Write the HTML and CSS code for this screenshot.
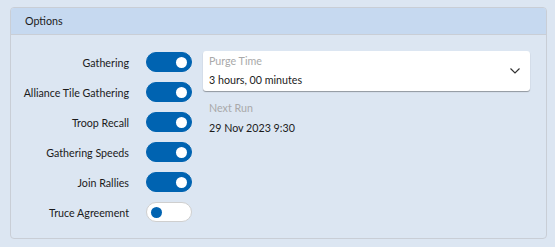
FILE: index.html
```html
<!DOCTYPE html>
<html lang="en">
<head>
    <meta charset="UTF-8">
    <title>Options</title>
    <link rel="stylesheet" href="styles.css">
</head>
<body>
    <div class="panel">
        <div class="panel-header">Options</div>

        <div class="panel-body">
            <!-- toggles -->
            <div class="toggle-list">
                <div class="toggle-row">
                    <span class="toggle-label">Gathering</span>
                    <span class="toggle on"><span class="knob"></span></span>
                </div>
                <div class="toggle-row">
                    <span class="toggle-label">Alliance Tile Gathering</span>
                    <span class="toggle on"><span class="knob"></span></span>
                </div>
                <div class="toggle-row">
                    <span class="toggle-label">Troop Recall</span>
                    <span class="toggle on"><span class="knob"></span></span>
                </div>
                <div class="toggle-row">
                    <span class="toggle-label">Gathering Speeds</span>
                    <span class="toggle on"><span class="knob"></span></span>
                </div>
                <div class="toggle-row">
                    <span class="toggle-label">Join Rallies</span>
                    <span class="toggle on"><span class="knob"></span></span>
                </div>
                <div class="toggle-row">
                    <span class="toggle-label">Truce Agreement</span>
                    <span class="toggle"><span class="knob"></span></span>
                </div>
            </div>

            <!-- schedule -->
            <div class="schedule">
                <div class="dropdown">
                    <div class="dropdown-text">
                        <div class="field-label">Purge Time</div>
                        <div class="dropdown-value">3 hours, 00 minutes</div>
                    </div>
                    <svg class="chevron" width="10" height="6" viewBox="0 0 10 6">
                        <path d="M0.5 0.5 L5 5 L9.5 0.5" fill="none" stroke="#333" stroke-width="1.2"/>
                    </svg>
                </div>
                <div class="next-run">
                    <div class="field-label">Next Run</div>
                    <div class="next-run-value">29 Nov 2023 9:30</div>
                </div>
            </div>
        </div>
    </div>
</body>
</html>
```

FILE: styles.css
```css
:root {
    --accent: #0063b1;
    --text: #1b1b1b;
    --muted: #a9a9a9;
    --border: #c9ced6;
}

* {
    box-sizing: border-box;
    margin: 0;
    padding: 0;
}

body {
    background: #dce6f2;
    font-family: Lato, 'Liberation Sans', sans-serif;
    font-size: 10.7px;
    color: var(--text);
    padding: 7px 9px 0 10px;
}

.panel {
    width: 537px;
    height: 232px;
    border: 1px solid var(--border);
    border-radius: 4px;
    background: #dce6f2;
    overflow: hidden;
}

.panel-header {
    height: 27px;
    background: #c6d9f0;
    border-bottom: 1px solid var(--border);
    padding-left: 14px;
    line-height: 26px;
}

.panel-body {
    display: flex;
    padding: 17px 0 0 0;
}

.toggle-list {
    display: flex;
    flex-direction: column;
    gap: 10px;
}

.toggle-row {
    display: flex;
    align-items: center;
    height: 20px;
}

.toggle-label {
    width: 118px;
    text-align: right;
    margin-right: 17px;
    white-space: nowrap;
}

.toggle {
    width: 46px;
    height: 20px;
    border-radius: 10px;
    border: 1px solid #cfcfcf;
    background: #fff;
    display: flex;
    align-items: center;
    padding: 0 4px;
}

.toggle.on {
    background: var(--accent);
    border-color: var(--accent);
    justify-content: flex-end;
}

.knob {
    width: 11px;
    height: 11px;
    border-radius: 50%;
    background: var(--accent);
}

.toggle.on .knob {
    background: #fff;
}

.schedule {
    margin-left: 11px;
    margin-top: -1px;
    width: 327px;
}

.dropdown {
    height: 40px;
    background: #fff;
    border-radius: 3px;
    box-shadow: 0 1px 1px rgba(0, 0, 0, 0.35);
    display: flex;
    align-items: center;
    justify-content: space-between;
    padding: 0 10px 0 6px;
}

.dropdown-text {
    display: flex;
    flex-direction: column;
    gap: 3px;
    margin-top: -1px;
}

.field-label {
    color: var(--muted);
    line-height: 16px;
}

.dropdown-value {
    line-height: 16px;
}

.next-run {
    padding: 9px 6px 0;
    display: flex;
    flex-direction: column;
    gap: 4px;
}

.next-run-value {
    line-height: 16px;
}
```
